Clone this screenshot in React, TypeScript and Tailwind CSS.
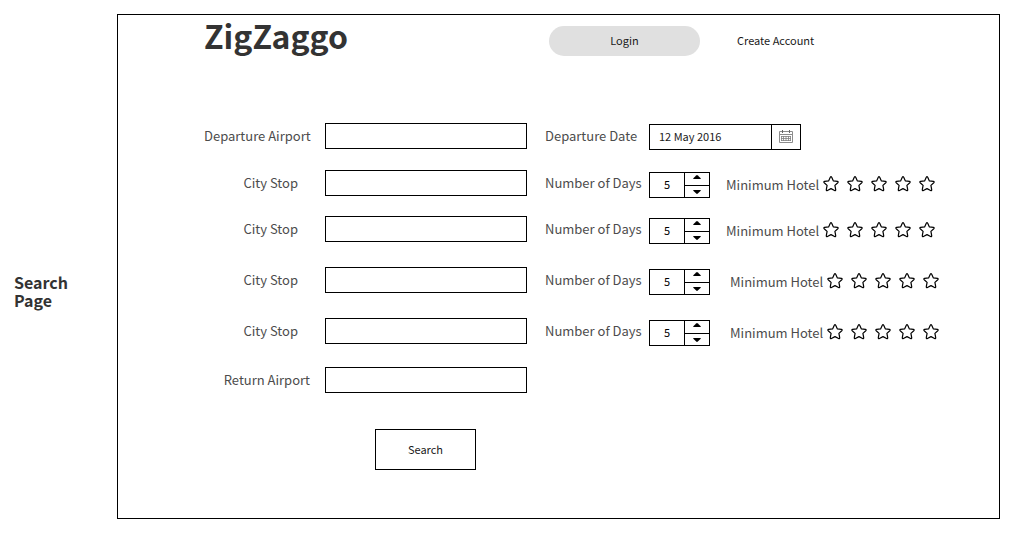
import { useState } from "react";

type Stop = { id: string; rowClass: string; hotelClass: string };

const stops: Stop[] = [
  { id: "stop-1", rowClass: "mt-[19px]", hotelClass: "ml-4" },
  { id: "stop-2", rowClass: "mt-[18px]", hotelClass: "ml-4" },
  { id: "stop-3", rowClass: "mt-[23px]", hotelClass: "ml-5" },
  { id: "stop-4", rowClass: "mt-[23px]", hotelClass: "ml-5" },
];

const labelText = "text-[13px] leading-[26px] text-[#4c4c4c] whitespace-nowrap";

function TextField({ id, label, inset }: { id: string; label: string; inset?: boolean }) {
  return (
    <>
      <label
        htmlFor={id}
        className={`${labelText} w-[107px] shrink-0 text-right ${inset ? "pr-[13px]" : "pr-px"}`}
      >
        {label}
      </label>
      <input
        id={id}
        type="text"
        className="ml-[14px] h-[26px] w-[202px] shrink-0 border border-black bg-white px-2 text-[11px] outline-none"
      />
    </>
  );
}

function Stepper({ id }: { id: string }) {
  const [days, setDays] = useState(5);
  return (
    <div className="flex h-[26px] w-[61px] shrink-0 self-end border border-black bg-white">
      <input
        id={id}
        type="text"
        inputMode="numeric"
        value={days}
        onChange={(e) => setDays(Number(e.target.value) || 0)}
        className="w-[34px] pb-0.5 text-center text-[11px] text-black outline-none"
      />
      <div className="flex flex-1 flex-col border-l border-black">
        <button
          type="button"
          aria-label="More days"
          onClick={() => setDays(days + 1)}
          className="flex h-[13px] justify-center border-b border-black pt-0.5"
        >
          <svg width="8" height="4" viewBox="0 0 8 4" aria-hidden="true">
            <path d="M0.3 4V3.2L3.2 0.4Q4 -0.3 4.8 0.4L7.7 3.2V4Z" />
          </svg>
        </button>
        <button
          type="button"
          aria-label="Fewer days"
          onClick={() => setDays(Math.max(0, days - 1))}
          className="flex flex-1 justify-center pt-1"
        >
          <svg width="8" height="4" viewBox="0 0 8 4" aria-hidden="true">
            <path d="M0.3 0V0.8L3.2 3.6Q4 4.3 4.8 3.6L7.7 0.8V0Z" />
          </svg>
        </button>
      </div>
    </div>
  );
}

function Stars() {
  const [rating, setRating] = useState(0);
  return (
    <div className="ml-1 flex gap-2">
      {[1, 2, 3, 4, 5].map((n) => (
        <button
          key={n}
          type="button"
          aria-label={`${n} star hotel`}
          onClick={() => setRating(n)}
          className="flex h-6 w-4 items-center justify-center"
        >
          <svg
            width="16"
            height="16"
            viewBox="0 0 16 16"
            fill={n <= rating ? "black" : "none"}
            stroke="black"
            strokeWidth="1.2"
            strokeLinejoin="round"
            aria-hidden="true"
          >
            <path d="M7.3 1.2Q8 0.1 8.7 1.2L10.4 4.9L14.4 5.4Q15.7 5.7 14.8 6.7L11.9 9.4L12.7 13.6Q12.8 15.1 11.6 14.5L8 12.6L4.4 14.5Q3.2 15.1 3.3 13.6L4.1 9.4L1.2 6.7Q0.3 5.7 1.6 5.4L5.6 4.9Z" />
          </svg>
        </button>
      ))}
    </div>
  );
}

function CalendarIcon() {
  return (
    <svg width="14" height="14" viewBox="0 0 14 14" fill="none" aria-hidden="true">
      <path d="M0.5 1.5H13.5V12.5H0.5ZM0.5 4.5H13.5" stroke="#8c8c8c" />
      <path d="M3.5 0V3M10.5 0V3" stroke="#666666" />
      <path
        d="M2 6.5H12M2 8.5H12M2 10.5H12M2.5 6V11M4.5 6V11M7 6V11M9.5 6V11M11.5 6V11"
        stroke="#808080"
        strokeWidth="0.8"
      />
    </svg>
  );
}

export default function App() {
  return (
    <div className="flex items-center bg-white pt-[14px] pr-[19px] pb-[17px] pl-[14px] font-['Noto_Sans_CJK_SC',sans-serif]">
      <h2 className="w-[103px] shrink-0 pt-12 text-base leading-[18px] font-bold text-[#333333]">
        Search
        <br />
        Page
      </h2>
      <main className="flex-1 border border-black pt-[11px] pb-12 pl-[86px]">
        <header className="flex items-start">
          <h1 className="-mt-1.5 w-[345px] shrink-0 text-[32px] leading-[30px] font-bold text-[#333333]">
            ZigZaggo
          </h1>
          <button
            type="button"
            className="h-[30px] w-[151px] shrink-0 rounded-full bg-[#e0e0e0] pb-0.5 text-[11px] text-[#1a1a1a]"
          >
            Login
          </button>
          <a
            href="#create-account"
            className="ml-[37px] text-[11px] leading-7 whitespace-nowrap text-[#1a1a1a]"
          >
            Create Account
          </a>
        </header>

        <form className="mt-[67px]" onSubmit={(e) => e.preventDefault()}>
          <div className="flex h-7 items-start">
            <TextField id="departure-airport" label="Departure Airport" />
            <label
              htmlFor="departure-date"
              className={`${labelText} ml-[18px] w-[104px] shrink-0`}
            >
              Departure Date
            </label>
            <div className="flex h-[26px] w-[152px] shrink-0 self-center border border-black bg-white">
              <input
                id="departure-date"
                type="text"
                defaultValue="12 May 2016"
                className="w-[121px] pb-0.5 pl-[9px] text-[11px] text-[#1a1a1a] outline-none"
              />
              <button
                type="button"
                aria-label="Open calendar"
                className="flex flex-1 items-center justify-center border-l border-black"
              >
                <CalendarIcon />
              </button>
            </div>
          </div>

          {stops.map((stop) => (
            <div key={stop.id} className={`flex h-7 items-start ${stop.rowClass}`}>
              <TextField id={stop.id} label="City Stop" inset />
              <label
                htmlFor={`${stop.id}-days`}
                className={`${labelText} ml-[18px] w-[104px] shrink-0`}
              >
                Number of Days
              </label>
              <Stepper id={`${stop.id}-days`} />
              <div
                role="group"
                aria-label="Minimum hotel rating"
                className={`flex self-end ${stop.hotelClass}`}
              >
                <span className={labelText}>Minimum Hotel</span>
                <Stars />
              </div>
            </div>
          ))}

          <div className="mt-[21px] flex h-7 items-start">
            <TextField id="return-airport" label="Return Airport" />
          </div>

          <button
            type="submit"
            className="mt-[34px] ml-[171px] block h-[41px] w-[101px] border border-black bg-white text-[11px] text-[#1a1a1a]"
          >
            Search
          </button>
        </form>
      </main>
    </div>
  );
}
